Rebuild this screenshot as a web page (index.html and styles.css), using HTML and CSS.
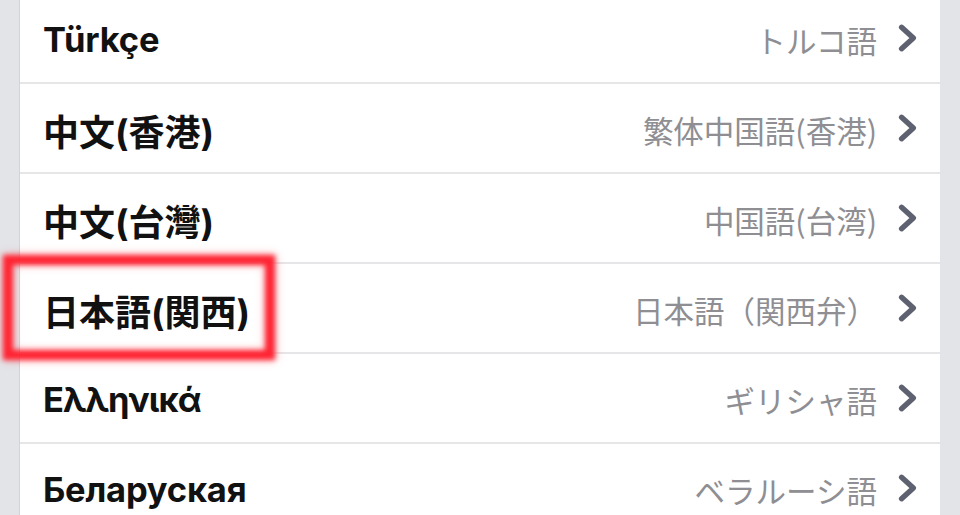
FILE: index.html
```html
<!DOCTYPE html>
<html lang="ja">
<head>
<meta charset="utf-8">
<link rel="stylesheet" href="styles.css">
</head>
<body>
<div class="panel">
  <ul class="list">
    <li class="row"><span class="name">Türkçe</span><span class="meta"><span class="local">トルコ語</span><svg class="chev" viewBox="0 0 20 28"><polyline points="4,4 15,14 4,24"/></svg></span></li>
    <li class="row"><span class="name cjk">中文(香港)</span><span class="meta"><span class="local">繁体中国語(香港)</span><svg class="chev" viewBox="0 0 20 28"><polyline points="4,4 15,14 4,24"/></svg></span></li>
    <li class="row"><span class="name cjk">中文(台灣)</span><span class="meta"><span class="local">中国語(台湾)</span><svg class="chev" viewBox="0 0 20 28"><polyline points="4,4 15,14 4,24"/></svg></span></li>
    <li class="row"><span class="name cjk">日本語(関西)</span><span class="meta"><span class="local">日本語（関西弁）</span><svg class="chev" viewBox="0 0 20 28"><polyline points="4,4 15,14 4,24"/></svg></span><span class="mark"></span></li>
    <li class="row"><span class="name greek">Ελληνικά</span><span class="meta"><span class="local">ギリシャ語</span><svg class="chev" viewBox="0 0 20 28"><polyline points="4,4 15,14 4,24"/></svg></span></li>
    <li class="row"><span class="name">Беларуская</span><span class="meta"><span class="local">ベラルーシ語</span><svg class="chev" viewBox="0 0 20 28"><polyline points="4,4 15,14 4,24"/></svg></span></li>
  </ul>
</div>
</body>
</html>
```
FILE: styles.css
```css
html, body {
  margin: 0;
  padding: 0;
  height: 100%;
  overflow: hidden;
}
body {
  background: #e3e4e8;
  font-family: "Inter", "Noto Sans CJK JP", sans-serif;
}
.panel {
  margin: 0 20px 0 19px;
  background: #fff;
  border-left: 1px solid #d2d3d7;
  min-height: 100%;
}
.list {
  list-style: none;
  margin: -6px 0 0 0;
  padding: 0;
}
.row {
  position: relative;
  height: 88px;
  border-bottom: 2px solid #e6e6e8;
  display: flex;
  align-items: center;
  justify-content: space-between;
  padding: 0 21px 0 23px;
}
.name {
  font-size: 34.5px;
  font-weight: 700;
  color: #111;
  letter-spacing: -0.2px;
  padding-top: 3px;
}
.name.cjk {
  font-size: 36px;
  letter-spacing: 0;
}
.name.greek {
  letter-spacing: -1px;
}
.meta {
  display: flex;
  align-items: center;
  gap: 20px;
}
.local {
  font-family: "Noto Sans CJK JP", sans-serif;
  font-size: 30.5px;
  font-weight: 400;
  color: #8e8e93;
  padding-top: 3px;
}
.chev {
  width: 22px;
  height: 30px;
  fill: none;
  stroke: #5d6170;
  stroke-width: 5;
  stroke-linecap: round;
  stroke-linejoin: round;
}
.mark {
  position: absolute;
  top: -9px;
  left: -17px;
  width: 252px;
  height: 85px;
  border: 10px solid #ff2433;
  filter: blur(2.4px);
  box-shadow: 0 0 7px rgba(255, 40, 50, 0.5), inset 0 0 7px rgba(255, 40, 50, 0.45);
  pointer-events: none;
}
```
